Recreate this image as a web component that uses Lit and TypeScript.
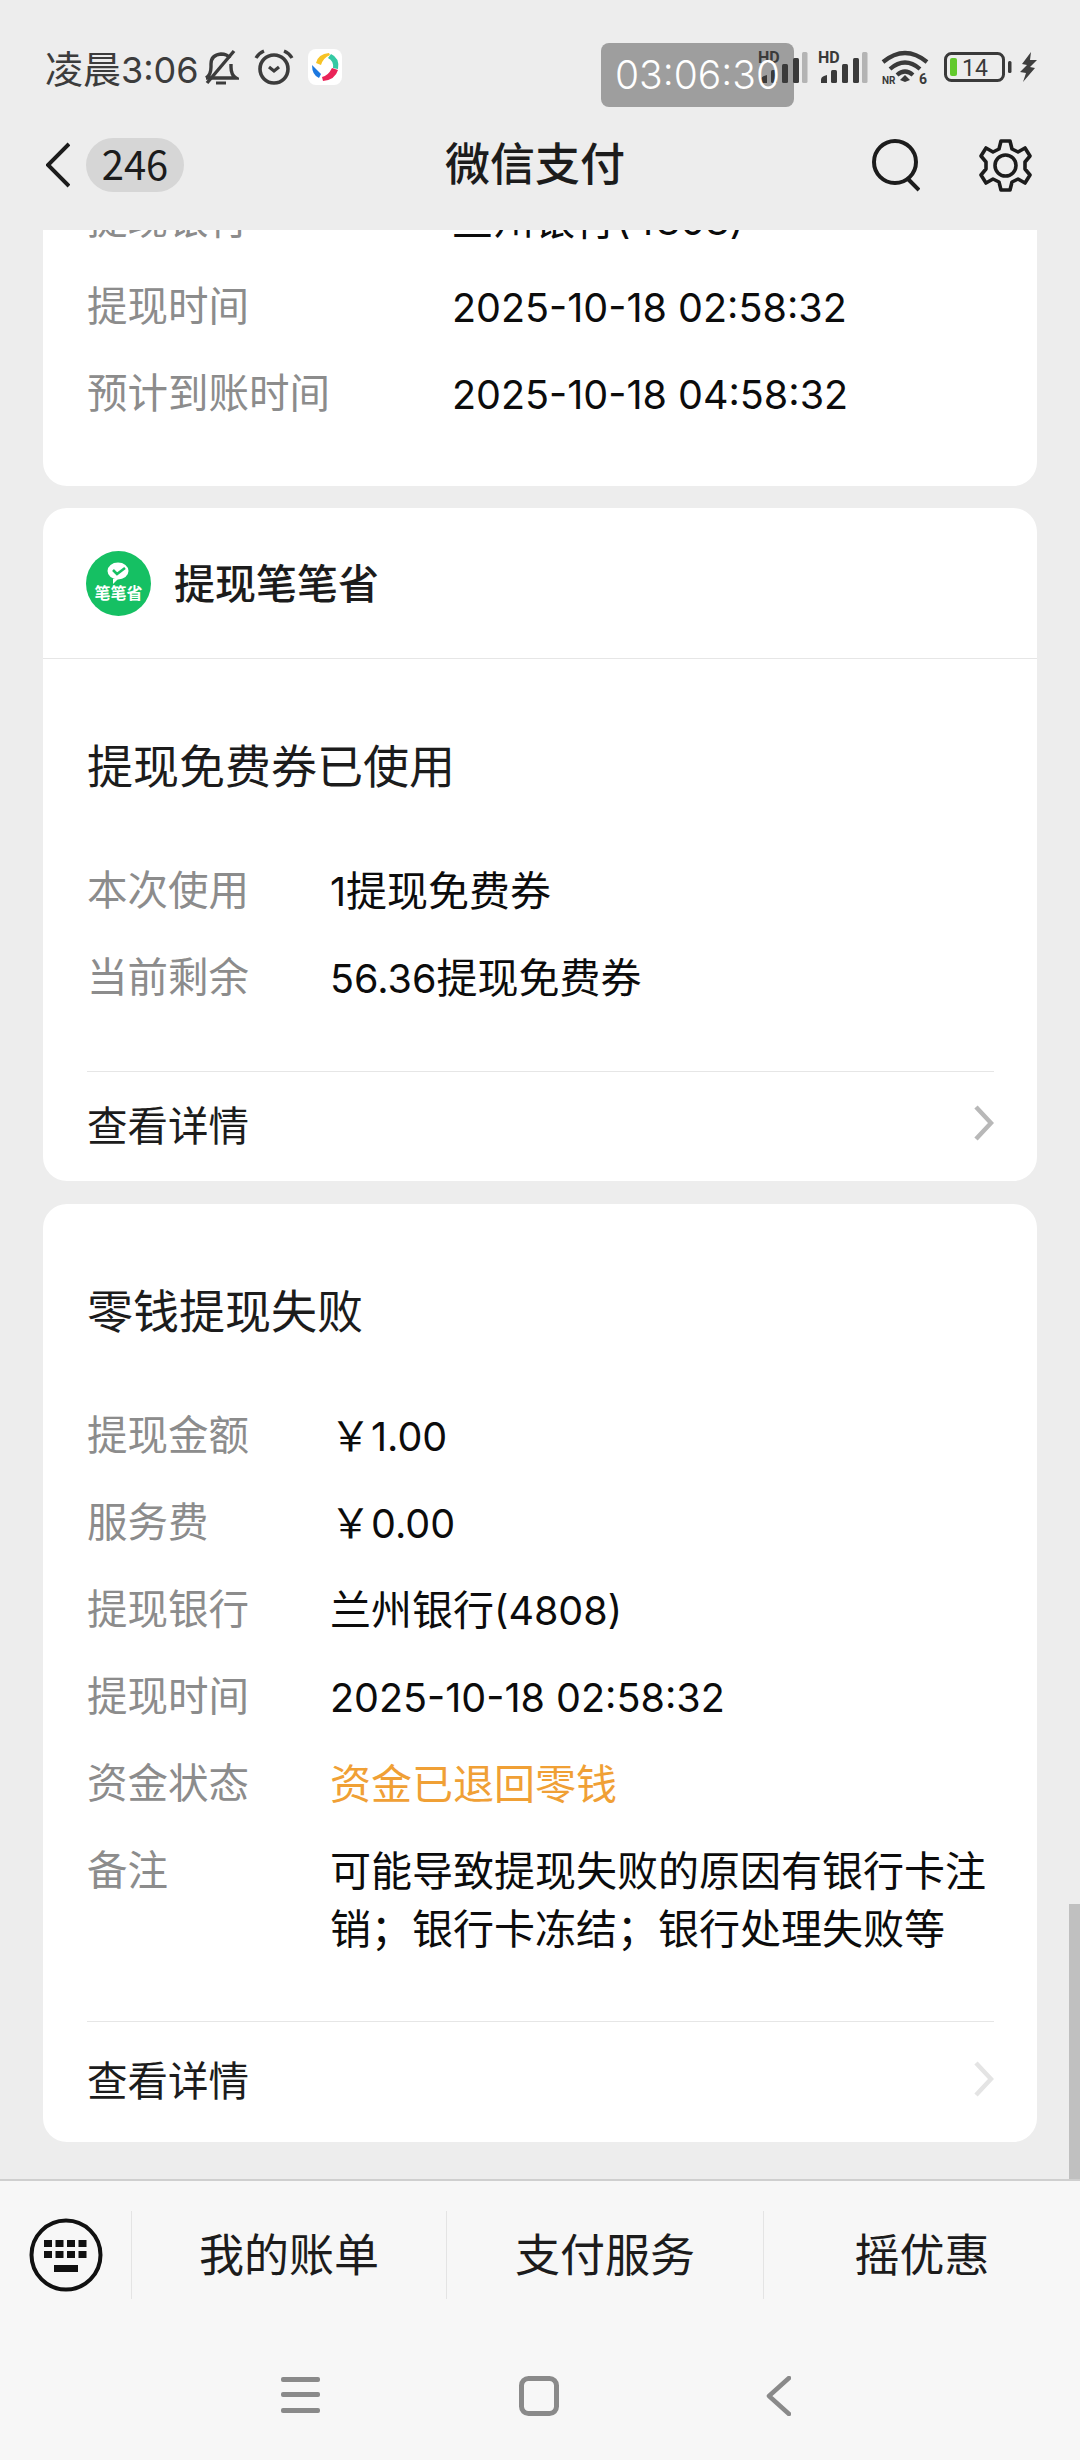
import { LitElement, css, html, svg } from "lit";
import { customElement } from "lit/decorators.js";

const chevron = (color: string) => html`<svg class="chev" width="20" height="36" viewBox="0 0 20 36" fill="none">
  <path d="M2 2 L17 18 L2 34" stroke=${color} stroke-width="4.5"/>
</svg>`;

// signal bars, the last one is the weak grey bar
const signal = () => html`<svg width="50" height="34" viewBox="0 0 50 34">
  <text x="0" y="13" font-family="Roboto, sans-serif" font-weight="700" font-size="16" fill="#3a3a3a">HD</text>
  <path d="M3 33v-3q0-3 3-4l3-1v8z" fill="#3a3a3a"/>
  <rect x="13" y="20" width="6" height="13" rx="1.5" fill="#3a3a3a"/>
  <rect x="24" y="14" width="6" height="19" rx="1.5" fill="#3a3a3a"/>
  <rect x="35" y="8" width="6" height="25" rx="1.5" fill="#3a3a3a"/>
  <rect x="44" y="2" width="5.5" height="31" rx="1.5" fill="#b4b4b4"/>
</svg>`;

const pair = (label: string, value: unknown) => html`<div class="row">
  <span class="label">${label}</span><span class="value">${value}</span>
</div>`;

const num = (text: string) => html`<span class="num">${text}</span>`;

@customElement("app-root")
class AppRoot extends LitElement {
  static styles = css`
    :host {
      display: flex;
      flex-direction: column;
      position: relative;
      width: 1080px;
      height: 2460px;
      overflow: hidden;
      background: #ededed;
      font-family: "Noto Sans CJK SC", sans-serif;
      color: #111;
    }
    .num { font-family: Inter, "Noto Sans CJK SC", sans-serif; font-size: 39.5px; line-height: 0; }
    .status {
      height: 108px;
      flex: none;
      display: flex;
      align-items: center;
      padding: 26px 43px 0 45px;
      box-sizing: border-box;
      color: #3c3c3c;
    }
    .clock { font-size: 38px; line-height: 44px; margin-right: 4px; }
    .clock .num { font-size: 36px; }
    .status .bell { margin-right: 15px; }
    .status .alarm { margin-right: 14px; }
    .spacer { flex: 1; }
    /* the recording pill sits under the system icons, its digits above them */
    .sysicons { display: flex; align-items: center; gap: 10px; position: relative; z-index: 1; }
    .sysicons svg:nth-child(2) { margin-right: 3px; }
    .timer {
      position: absolute;
      left: 601px;
      top: 43px;
      width: 193px;
      height: 64px;
      border-radius: 8px;
      background: #9e9e9e;
      color: #fff;
      font-family: Inter, sans-serif;
      font-weight: 300;
      font-size: 39px;
      line-height: 64px;
      text-align: center;
    }
    .timer span { position: relative; z-index: 2; }
    .nav {
      height: 122px;
      flex: none;
      display: flex;
      align-items: center;
      position: relative;
      padding: 0 47px 8px 46px;
      box-sizing: border-box;
    }
    .badge {
      margin-left: 16px;
      width: 98px;
      height: 54px;
      border-radius: 27px;
      background: #d6d6d6;
      font-size: 40px;
      line-height: 50px;
      text-align: center;
      color: #1c1c1c;
    }
    .title {
      position: absolute;
      left: 0;
      right: 10px;
      top: 24px;
      text-align: center;
      font-size: 45px;
      font-weight: 500;
      line-height: 60px;
      color: #1c1c1c;
      pointer-events: none;
    }
    .nav .search { margin-right: 58px; }
    .scroll {
      flex: 1;
      min-height: 0;
      overflow: hidden;
      padding: 0 43px;
      border-bottom: 2px solid #cfcfcf;
    }
    .card {
      background: #fff;
      border-radius: 24px;
      margin-bottom: 23px;
    }
    .first {
      margin-top: -42px;
      margin-bottom: 22px;
      padding: 0 44px;
      height: 298px;
      box-sizing: border-box;
    }
    .first .row { grid-template-columns: 365px 1fr; }
    .card-head {
      display: flex;
      align-items: center;
      gap: 23px;
      height: 146px;
      padding: 0 44px 4px 43px;
      border-bottom: 1px solid #e6e6e6;
    }
    .card-head svg { margin-bottom: -4px; }
    .card-head span { font-size: 41px; font-weight: 500; color: #1c1c1c; }
    .body { padding: 74px 44px 0; }
    .third { padding-top: 74px; }
    .heading {
      font-size: 46px;
      line-height: 60px;
      color: #1c1c1c;
      margin-bottom: 66px;
    }
    .row {
      display: grid;
      grid-template-columns: 243px 1fr;
      line-height: 58px;
      margin-bottom: 29px;
    }
    .label { font-size: 40.5px; color: #8c8c8c; }
    .value { font-size: 41px; color: #0c0c0c; }
    .orange { color: #f0a035; }
    .rows-end { height: 38px; }
    .third .rows-end { height: 37px; }
    .link {
      display: flex;
      align-items: center;
      justify-content: space-between;
      margin: 0 43px 0 44px;
      height: 102px;
      padding-bottom: 7px;
      border-top: 1px solid #e6e6e6;
      font-size: 40.5px;
      color: #1c1c1c;
    }
    .link.tall { height: 113px; }
    .scrollbar {
      position: absolute;
      left: 1069px;
      top: 1904px;
      width: 11px;
      height: 275px;
      background: #c0c0c0;
    }
    .bottom {
      flex: none;
      height: 279px;
      background: #f7f7f7;
      box-sizing: border-box;
      padding-top: 30px;
    }
    .tabs { display: grid; grid-template-columns: 131px 315px 317px 317px; height: 88px; }
    .tab {
      display: flex;
      align-items: center;
      justify-content: center;
      font-size: 45px;
      padding-bottom: 6px;
      color: #1c1c1c;
      border-left: 1px solid #e4e4e4;
    }
    .kb { display: flex; align-items: center; justify-content: center; }
    .sysnav {
      display: flex;
      justify-content: center;
      align-items: center;
      height: 40px;
      margin-top: 77px;
      padding-right: 8px;
      gap: 0;
    }
    .sysnav .menu { margin-right: 199px; }
    .sysnav .home { margin-right: 207px; }
  `;

  render() {
    return html`
      <div class="status">
        <span class="clock">凌晨${num("3:06")}</span>
        <svg class="bell" width="36" height="36" viewBox="0 0 36 36" fill="none" stroke="#3c3c3c" stroke-width="3.4">
          <path d="M3 29 Q8 26 8 18 V15 Q8 6 18 5 Q24 5 27 9 M28 15 V18 Q28 26 33 29 H3"/>
          <path d="M4 34 L31 2"/><path d="M13 34 H23" stroke-width="3"/>
        </svg>
        <svg class="alarm" width="40" height="36" viewBox="0 0 40 36" fill="none" stroke="#3c3c3c" stroke-width="3.6">
          <circle cx="20" cy="20" r="14"/>
          <path d="M15 18 L20 22 L25 18" stroke-width="3.2"/>
          <path d="M2 9 Q5 4 10 2 M38 9 Q35 4 30 2" stroke-width="3.4"/>
        </svg>
        <svg width="34" height="36" viewBox="0 0 34 36">
          <rect width="34" height="36" rx="8" fill="#fff"/>
          <path d="M8 14 Q10 5 21 4 L22 6 Q15 9 13 16z" fill="#f7c325"/>
          <path d="M23 5 Q32 9 30 20 L25 19 Q26 12 20 9z" fill="#35c9a4"/>
          <path d="M30 21 Q27 31 15 32 L14 28 Q20 27 24 19z" fill="#ea2358"/>
          <path d="M4 16 L13 25 L11 29 Q4 26 4 16z" fill="#1c78e0"/>
        </svg>
        <span class="spacer"></span>
        <div class="sysicons">
          ${signal()} ${signal()}
          <svg width="48" height="36" viewBox="0 0 48 36" fill="none" stroke="#3a3a3a" stroke-width="4.2">
            <path d="M2 13 Q24 -5 46 13"/><path d="M9 20 Q24 7 39 20"/><path d="M16 26 Q24 19 32 26"/>
            <path d="M24 26 L29 31 L24 33 L19 31z" fill="#3a3a3a" stroke="none"/>
            <text x="1" y="35" font-family="Roboto, sans-serif" font-size="10" font-weight="700" fill="#3a3a3a" stroke="none">NR</text>
            <text x="38" y="35" font-family="Roboto, sans-serif" font-size="14" font-weight="700" fill="#3a3a3a" stroke="none">6</text>
          </svg>
          <svg width="68" height="30" viewBox="0 0 68 30" fill="none" style="margin-left:5px">
            <rect x="1.5" y="1.5" width="58" height="27" rx="6" stroke="#3a3a3a" stroke-width="3"/>
            <rect x="6" y="6" width="7" height="18" rx="2" fill="#62c92c"/>
            <text x="18" y="24" font-family="Roboto, sans-serif" font-size="23" fill="#3a3a3a">14</text>
            <rect x="64" y="9" width="3.5" height="12" rx="1.5" fill="#3a3a3a"/>
          </svg>
          <svg width="17" height="30" viewBox="0 0 17 30" style="margin-left:-2px">
            <path d="M11 0 L2 12 L7 13 L0 20 L6 21 L3 30 L15 16 L10 15 L17 8 L10 8z" fill="#3f3f3f"/>
          </svg>
        </div>
      </div>
      <div class="timer"><span>03:06:30</span></div>
      <div class="nav">
        <svg width="24" height="46" viewBox="0 0 24 46" fill="none">
          <path d="M23 2 L2 23 L23 44" stroke="#1c1c1c" stroke-width="4"/>
        </svg>
        <span class="badge">246</span>
        <span class="title">微信支付</span>
        <span class="spacer"></span>
        <svg class="search" width="48" height="54" viewBox="0 0 48 54" fill="none" stroke="#1c1c1c" stroke-width="4">
          <circle cx="23" cy="24" r="21"/><path d="M36 41 L47 52"/>
        </svg>
        <svg width="55" height="55" viewBox="0 0 55 55" fill="none" stroke="#1c1c1c" stroke-width="3.6" stroke-linejoin="round">
          <path d="M23 3 H32 L34 11 L40 14 L47 10 L52 18 L47 24 V31 L52 37 L47 45 L40 41 L34 44 L32 52 H23 L21 44 L15 41 L8 45 L3 37 L8 31 V24 L3 18 L8 10 L15 14 L21 11z"/>
          <circle cx="27.500" cy="27.500" r="10.500"/>
        </svg>
      </div>

      <div class="scroll">
        <div class="card first">
          ${pair("提现银行", html`兰州银行${num("(4808)")}`)}
          ${pair("提现时间", num("2025-10-18 02:58:32"))}
          ${pair("预计到账时间", num("2025-10-18 04:58:32"))}
        </div>

        <div class="card">
          <div class="card-head">
            <svg width="65" height="65" viewBox="0 0 65 65">
              <circle cx="32.500" cy="32.500" r="32.500" fill="#15c063"/>
              <ellipse cx="32" cy="20" rx="10.500" ry="8.500" fill="#fff"/>
              <path d="M27 28 L27 33 L32 28z" fill="#fff"/>
              <path d="M27 19 L31 23 L39 17" fill="none" stroke="#15c063" stroke-width="2.500"/>
              <text x="32.500" y="48" text-anchor="middle" font-family="'Noto Sans CJK SC', sans-serif" font-weight="700" font-size="16" fill="#fff">笔笔省</text>
            </svg>
            <span>提现笔笔省</span>
          </div>
          <div class="body">
            <div class="heading">提现免费券已使用</div>
            ${pair("本次使用", html`${num("1")}提现免费券`)}
            ${pair("当前剩余", html`${num("56.36")}提现免费券`)}
            <div class="rows-end"></div>
          </div>
          <div class="link">查看详情 ${chevron("#b8b8b8")}</div>
        </div>

        <div class="card">
          <div class="body third">
            <div class="heading">零钱提现失败</div>
            ${pair("提现金额", html`￥${num("1.00")}`)}
            ${pair("服务费", html`￥${num("0.00")}`)}
            ${pair("提现银行", html`兰州银行${num("(4808)")}`)}
            ${pair("提现时间", num("2025-10-18 02:58:32"))}
            ${pair("资金状态", html`<span class="orange">资金已退回零钱</span>`)}
            ${pair("备注", "可能导致提现失败的原因有银行卡注销；银行卡冻结；银行处理失败等")}
            <div class="rows-end"></div>
          </div>
          <div class="link tall">查看详情 ${chevron("#e4e4e4")}</div>
        </div>
      </div>
      <div class="scrollbar"></div>

      <div class="bottom">
        <div class="tabs">
          <div class="kb">
            <svg width="74" height="74" viewBox="0 0 74 74">
              <circle cx="37" cy="37" r="34.500" fill="none" stroke="#111" stroke-width="4"/>
              ${[0, 1, 2, 3].map((i) => svg`
                <rect x=${15 + i * 11.500} y="22" width="8" height="7" fill="#111"/>
                <rect x=${15 + i * 11.500} y="33" width="8" height="7" fill="#111"/>`)}
              <rect x="25" y="47" width="24" height="7" fill="#111"/>
            </svg>
          </div>
          <div class="tab">我的账单</div>
          <div class="tab">支付服务</div>
          <div class="tab">摇优惠</div>
        </div>
        <div class="sysnav">
          <svg class="menu" width="39" height="38" viewBox="0 0 39 38" fill="#8a8a8a">
            <rect y="0" width="39" height="5" rx="2"/><rect y="15" width="39" height="5" rx="2"/><rect y="31" width="39" height="5" rx="2"/>
          </svg>
          <svg class="home" width="40" height="40" viewBox="0 0 40 40" fill="none">
            <rect x="2.500" y="2.500" width="35" height="35" rx="7" stroke="#8a8a8a" stroke-width="5"/>
          </svg>
          <svg width="25" height="40" viewBox="0 0 25 40" fill="none">
            <path d="M23 2 L3 20 L23 38" stroke="#8a8a8a" stroke-width="4.500" stroke-linecap="round" stroke-linejoin="round"/>
          </svg>
        </div>
      </div>
    `;
  }
}
